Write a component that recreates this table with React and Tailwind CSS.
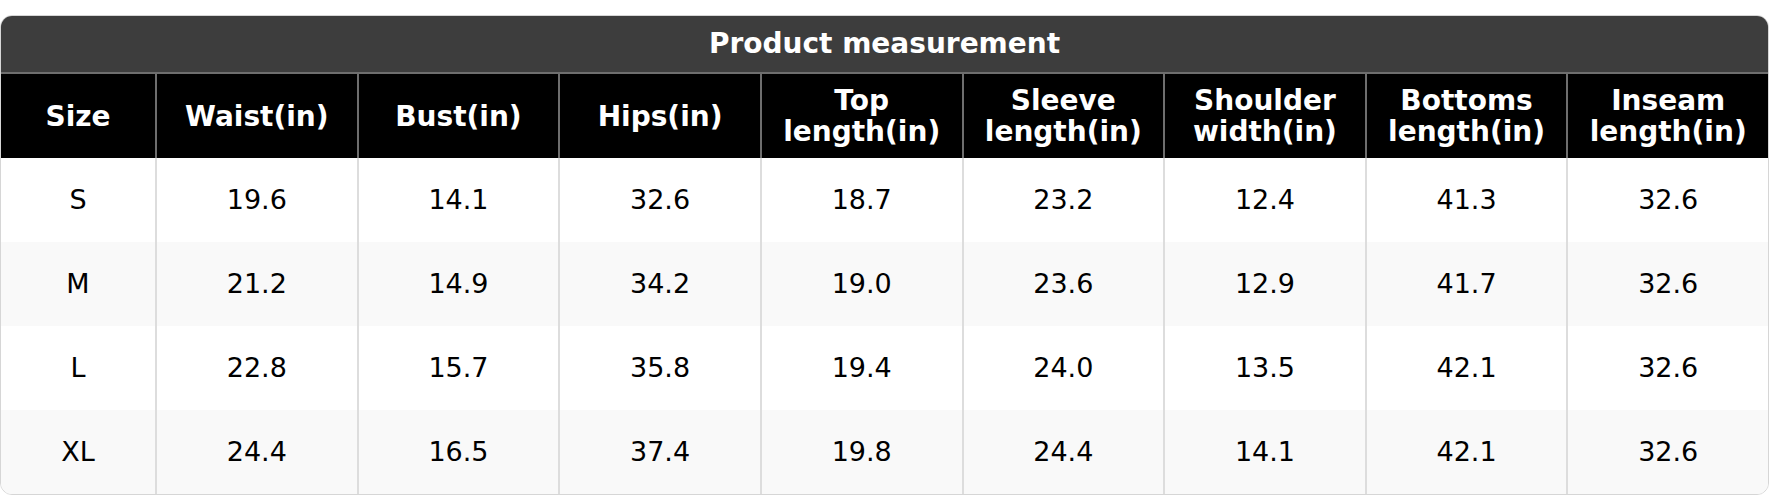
const headers = [
  ["Size"],
  ["Waist(in)"],
  ["Bust(in)"],
  ["Hips(in)"],
  ["Top", "length(in)"],
  ["Sleeve", "length(in)"],
  ["Shoulder", "width(in)"],
  ["Bottoms", "length(in)"],
  ["Inseam", "length(in)"],
];

const rows = [
  ["S", "19.6", "14.1", "32.6", "18.7", "23.2", "12.4", "41.3", "32.6"],
  ["M", "21.2", "14.9", "34.2", "19.0", "23.6", "12.9", "41.7", "32.6"],
  ["L", "22.8", "15.7", "35.8", "19.4", "24.0", "13.5", "42.1", "32.6"],
  ["XL", "24.4", "16.5", "37.4", "19.8", "24.4", "14.1", "42.1", "32.6"],
];

export default function App() {
  return (
    <div className="w-[1770px] h-[496px] bg-white pt-[15px]" style={{ fontFamily: '"DejaVu Sans", Verdana, sans-serif' }}>
      <div className="w-[1769px] rounded-[12px] border border-[#d6d6d6] overflow-hidden">
        <div className="h-[58px] bg-[#3d3d3d] border-b-2 border-[#6e6e6e] flex items-center justify-center text-white font-bold text-[28px] leading-none">
          Product measurement
        </div>
        <div className="grid grid-cols-[154px_repeat(8,1fr)] bg-black h-[84px]">
          {headers.map((h, i) => (
            <div
              key={i}
              className={`flex flex-col items-center justify-center text-white font-bold text-[28px] leading-[31px] ${i > 0 ? "border-l-2 border-[#6e6e6e]" : ""}`}
            >
              {h.map((l, j) => (
                <span key={j}>{l}</span>
              ))}
            </div>
          ))}
        </div>
        {rows.map((r, ri) => (
          <div
            key={ri}
            className={`grid grid-cols-[154px_repeat(8,1fr)] h-[84px] ${ri % 2 === 1 ? "bg-[#f9f9f9]" : "bg-white"}`}
          >
            {r.map((c, ci) => (
              <div
                key={ci}
                className={`flex items-center justify-center text-black text-[27px] ${ci > 0 ? "border-l-2 border-[#dddddd]" : ""}`}
              >
                {c}
              </div>
            ))}
          </div>
        ))}
      </div>
    </div>
  );
}
